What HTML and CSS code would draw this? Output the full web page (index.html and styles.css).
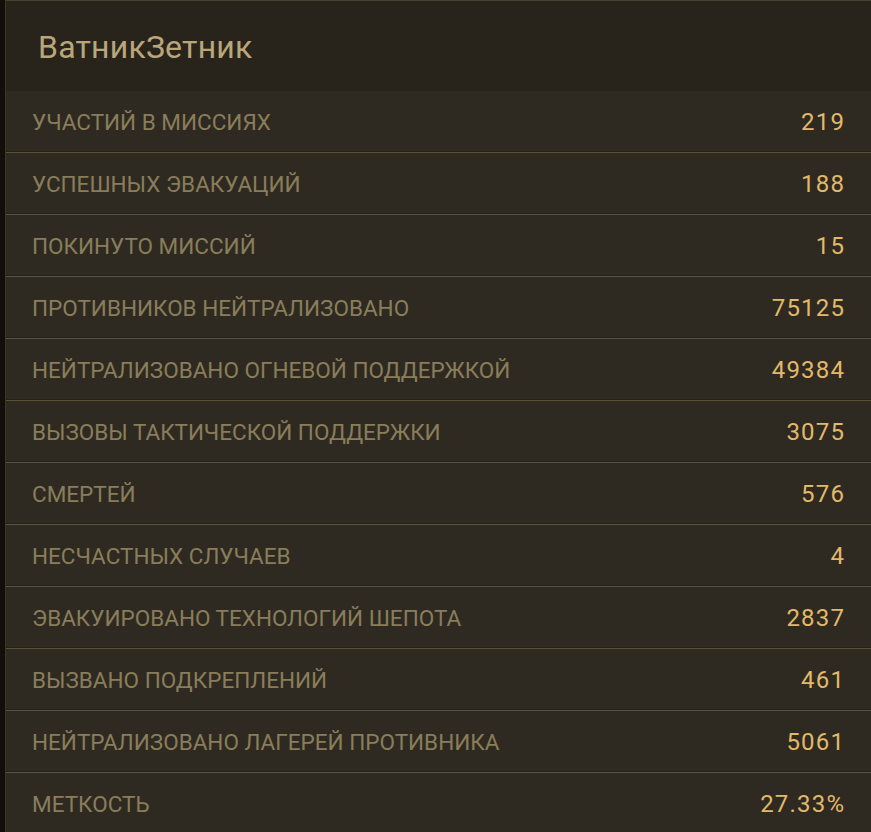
FILE: index.html
```html
<!DOCTYPE html>
<html lang="ru">
<head>
<meta charset="utf-8">
<title>ВатникЗетник</title>
<link rel="stylesheet" href="styles.css">
</head>
<body>
<div class="panel">
  <div class="header"><h1 class="title">ВатникЗетник</h1></div>
  <div class="stats">
    <div class="row"><span class="label">УЧАСТИЙ В МИССИЯХ</span><span class="value">219</span></div>
    <div class="row"><span class="label">УСПЕШНЫХ ЭВАКУАЦИЙ</span><span class="value">188</span></div>
    <div class="row"><span class="label">ПОКИНУТО МИССИЙ</span><span class="value">15</span></div>
    <div class="row"><span class="label">ПРОТИВНИКОВ НЕЙТРАЛИЗОВАНО</span><span class="value">75125</span></div>
    <div class="row"><span class="label">НЕЙТРАЛИЗОВАНО ОГНЕВОЙ ПОДДЕРЖКОЙ</span><span class="value">49384</span></div>
    <div class="row"><span class="label">ВЫЗОВЫ ТАКТИЧЕСКОЙ ПОДДЕРЖКИ</span><span class="value">3075</span></div>
    <div class="row"><span class="label">СМЕРТЕЙ</span><span class="value">576</span></div>
    <div class="row"><span class="label">НЕСЧАСТНЫХ СЛУЧАЕВ</span><span class="value">4</span></div>
    <div class="row"><span class="label">ЭВАКУИРОВАНО ТЕХНОЛОГИЙ ШЕПОТА</span><span class="value">2837</span></div>
    <div class="row"><span class="label">ВЫЗВАНО ПОДКРЕПЛЕНИЙ</span><span class="value">461</span></div>
    <div class="row"><span class="label">НЕЙТРАЛИЗОВАНО ЛАГЕРЕЙ ПРОТИВНИКА</span><span class="value">5061</span></div>
    <div class="row"><span class="label">МЕТКОСТЬ</span><span class="value">27.33%</span></div>
  </div>
</div>
</body>
</html>
```

FILE: styles.css
```css
html, body {
  margin: 0;
  padding: 0;
  background: #120e0a;
  height: 100%;
  overflow: hidden;
}
body {
  font-family: Roboto, "Liberation Sans", sans-serif;
}
.panel {
  margin-left: 5px;
  border-left: 1px solid #3b3628;
  border-top: 1px solid #47422f;
  background: #2e2a21;
  min-height: 831px;
}
.header {
  height: 90px;
  background: #28241c;
  display: flex;
  align-items: center;
  padding-left: 32px;
}
.title {
  margin: 0;
  font-weight: 400;
  font-size: 32px;
  color: #b9a77b;
  letter-spacing: 0.2px;
  padding-top: 2px;
}
.stats {
  display: flex;
  flex-direction: column;
}
.row {
  height: 61px;
  border-bottom: 1px solid #5b5336;
  display: flex;
  align-items: center;
  justify-content: space-between;
  padding: 0 27px 0 26px;
  box-shadow: inset 0 -1px 0 #24201a;
}
.label {
  font-size: 22.5px;
  color: #8a7d5a;
}
.value {
  font-size: 24px;
  letter-spacing: 1.2px;
  margin-right: -1.2px;
  color: #e2b96a;
}
```
